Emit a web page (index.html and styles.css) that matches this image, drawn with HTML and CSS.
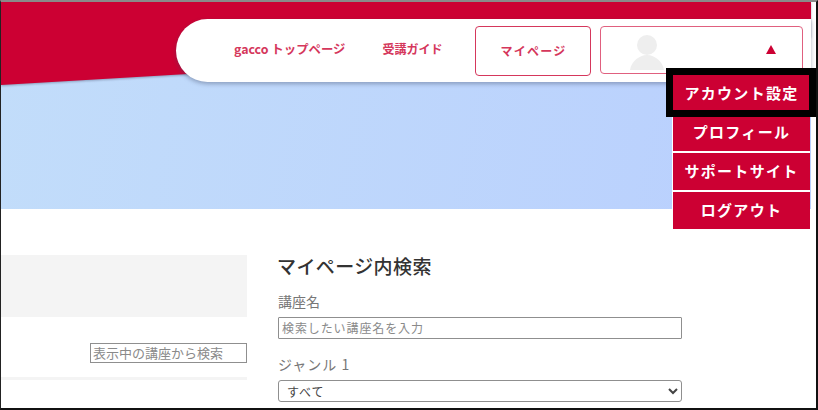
FILE: index.html
```html
<!DOCTYPE html>
<html lang="ja">
<head>
<meta charset="utf-8">
<title>マイページ</title>
<link rel="stylesheet" href="styles.css">
</head>
<body>
<div class="frame">
  <div class="page">
    <header class="hero">
      <svg class="wedge" viewBox="0 0 810 84" preserveAspectRatio="none" aria-hidden="true">
        <polygon points="0,0 810,0 810,35 0,83" fill="#cc0033"/>
      </svg>
      <nav class="navbar">
        <a class="navlink navlink-top">gacco トップページ</a>
        <a class="navlink navlink-guide">受講ガイド</a>
        <a class="navbtn">マイページ</a>
        <div class="userbtn">
          <svg class="avatar" viewBox="0 0 34 38" aria-hidden="true">
            <circle cx="17" cy="10" r="10" fill="#eeeeee"/>
            <path d="M0 35 C1 27 9 20 17 20 C25 20 33 27 34 35 Z" fill="#eeeeee"/>
          </svg>
          <span class="caret"></span>
        </div>
      </nav>
    </header>
    <main class="content">
      <section class="left">
        <div class="greybox"></div>
        <div class="filter-row"><input class="filter" type="text" placeholder="表示中の講座から検索"></div>
        <div class="rule"></div>
      </section>
      <section class="right">
        <h2 class="title">マイページ内検索</h2>
        <label class="label label-name">講座名</label>
        <input class="field" type="text" placeholder="検索したい講座名を入力">
        <label class="label label-genre">ジャンル 1</label>
        <select class="field select"><option>すべて</option></select>
      </section>
    </main>
    <ul class="menu">
      <li class="menu-item">アカウント設定</li>
      <li class="menu-item">プロフィール</li>
      <li class="menu-item">サポートサイト</li>
      <li class="menu-item">ログアウト</li>
    </ul>
    <div class="highlight"></div>
  </div>
</div>
</body>
</html>
```
FILE: styles.css
```css
* { box-sizing: border-box; }
html, body { margin: 0; padding: 0; background: #fff; }
body { width: 818px; height: 410px; overflow: hidden; font-family: "Noto Sans CJK JP", "Noto Sans", sans-serif; }
.frame { width: 818px; height: 410px; border-top: 2px solid #8a8a8a; border-left: 1px solid #222; border-right: 2px solid #111; border-bottom: 2px solid #111; overflow: hidden; }
.page { position: relative; width: 815px; height: 406px; }
.hero { position: relative; width: 810px; height: 207px; background: linear-gradient(100deg, #c2ddfa 0%, #b9cffe 100%); }
.wedge { position: absolute; left: 0; top: 0; width: 810px; height: 84px; filter: drop-shadow(0 1px 1px rgba(70,80,110,.45)); }
.navbar { position: absolute; left: 175px; top: 17px; width: 635px; height: 63px; background: #fff; border-radius: 32px 0 0 32px; box-shadow: 0 2px 4px rgba(60,70,100,.4); display: flex; align-items: center; }
.navlink { font-size: 12.4px; font-weight: 700; color: #d5375c; white-space: nowrap; margin-top: -4px; }
.navlink-top { margin-left: 58px; }
.navlink-guide { font-size: 12px; margin-left: 37px; }
.navbtn { margin-left: 33px; width: 116px; height: 50px; border: 1px solid #d5375c; border-radius: 4px; color: #d5375c; font-size: 12px; font-weight: 700; letter-spacing: 1.2px; display: flex; align-items: center; justify-content: center; }
.userbtn { margin-left: 9px; width: 203px; height: 48px; border: 1px solid #e0607f; border-radius: 4px; display: flex; align-items: flex-end; justify-content: space-between; padding: 0 26px 0 29px; margin-top: -2px; }
.avatar { width: 34px; height: 38px; display: block; }
.caret { width: 0; height: 0; border-left: 5px solid transparent; border-right: 5px solid transparent; border-bottom: 9px solid #cc0033; margin-bottom: 19px; }
.content { display: flex; }
.left { width: 246px; padding-top: 46px; flex: none; }
.greybox { height: 62px; background: #f4f4f4; }
.filter-row { display: flex; justify-content: flex-end; margin-top: 26px; }
.filter { width: 157px; height: 20px; border: 1px solid #8f8f8f; padding: 0 2px 2px; font: 13px "Noto Sans CJK JP", sans-serif; background: #fff; }
.filter::placeholder { color: #8a8a8a; opacity: 1; }
.rule { height: 3px; margin-top: 14px; background: #f4f4f4; }
.right { margin-left: 31px; width: 404px; padding-top: 44px; }
.title { margin: 0 0 0 -1px; font-size: 19px; font-weight: 500; line-height: 26px; color: #333; letter-spacing: .4px; }
.label { display: block; font-size: 14px; line-height: 20px; color: #777; }
.label-name { margin-top: 12px; }
.label-genre { margin-top: 15px; letter-spacing: 1px; }
.field { display: block; width: 404px; height: 22px; border: 1px solid #8f8f8f; border-radius: 1px; background: #fff; font: 12px "Noto Sans CJK JP", sans-serif; letter-spacing: .9px; padding: 0 3px 2px; margin-top: 6px; }
.field::placeholder { color: #8a8a8a; opacity: 1; }
.select { height: 22px; color: #444; padding: 0 4px; border-radius: 3px; }
.menu { position: absolute; left: 671px; top: 73px; width: 138px; margin: 0; padding: 0 0 0 1px; background: #fff; list-style: none; display: flex; flex-direction: column; gap: 2px; }
.menu-item { height: 37px; padding-bottom: 2px; background: #cc0033; color: #fff; font-size: 15px; font-weight: 700; letter-spacing: 1.3px; display: flex; align-items: center; justify-content: center; white-space: nowrap; }
.highlight { position: absolute; left: 665px; top: 66px; width: 150px; height: 49px; border: 7px solid #000; }
```
